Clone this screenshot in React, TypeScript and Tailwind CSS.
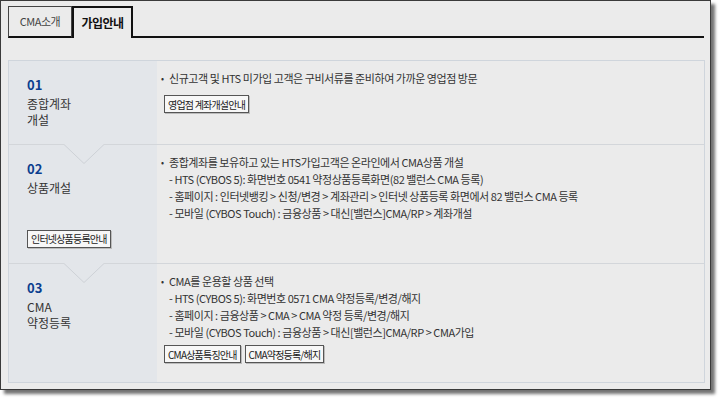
import React from 'react';

type Step = {
  no: string;
  title: string[];
  lead: string;
  subs: string[];
  leftButton?: string;
  buttons?: string[];
  height: string;
  buttonGap: string;
};

const STEPS: Step[] = [
  {
    no: '01',
    title: ['종합계좌', '개설'],
    lead: '신규고객 및 HTS 미가입 고객은 구비서류를 준비하여 가까운 영업점 방문',
    subs: [],
    buttons: ['영업점 계좌개설안내'],
    height: 'h-[83px]',
    buttonGap: 'mt-[8px]',
  },
  {
    no: '02',
    title: ['상품개설'],
    lead: '종합계좌를 보유하고 있는 HTS가입고객은 온라인에서 CMA상품 개설',
    subs: [
      'HTS (CYBOS 5): 화면번호 0541 약정상품등록화면(82 밸런스 CMA 등록)',
      '홈페이지 : 인터넷뱅킹 > 신청/변경 > 계좌관리 > 인터넷 상품등록 화면에서 82 밸런스 CMA 등록',
      '모바일 (CYBOS Touch) : 금융상품 > 대신[밸런스]CMA/RP > 계좌개설',
    ],
    leftButton: '인터넷상품등록안내',
    height: 'h-[119px]',
    buttonGap: 'mt-[4px]',
  },
  {
    no: '03',
    title: ['CMA', '약정등록'],
    lead: 'CMA를 운용할 상품 선택',
    subs: [
      'HTS (CYBOS 5): 화면번호 0571 CMA 약정등록/변경/해지',
      '홈페이지 : 금융상품 > CMA > CMA 약정 등록/변경/해지',
      '모바일 (CYBOS Touch) : 금융상품 > 대신[밸런스]CMA/RP > CMA가입',
    ],
    buttons: ['CMA상품특징안내', 'CMA약정등록/해지'],
    height: 'h-[119px]',
    buttonGap: 'mt-[4px]',
  },
];

function SmallButton({ label }: { label: string }) {
  return (
    <span className="inline-flex h-[18px] items-center border border-[#555] bg-[#f7f7f7] px-[3px] text-[10px] tracking-[-0.8px] text-[#222] shadow-[1px_1px_0_#bbb]">
      {label}
    </span>
  );
}

function Notch() {
  return (
    <svg className="absolute -top-px left-[55px]" width="40" height="21" viewBox="0 0 40 21">
      <rect x="0" y="0" width="40" height="1" fill="#e3e6ea" />
      <polyline points="0,0.5 20,19.5 40,0.5" fill="none" stroke="#cdd1d6" strokeWidth="1" />
    </svg>
  );
}

function StepRow({ step, first }: { step: Step; first: boolean }) {
  return (
    <div className={`flex ${step.height} ${first ? '' : 'border-t border-[#d3d6da]'}`}>
      <div className="relative flex w-[148px] flex-col bg-[#e3e6ea] pl-[18px] pt-[15px]">
        {!first && <Notch />}
        <div className="text-[13px] font-bold leading-[18px] text-[#0b3e8f]">{step.no}</div>
        <div className="mt-[2px] text-[12px] leading-[16px] text-[#333]">
          {step.title.map((t) => (
            <div key={t}>{t}</div>
          ))}
        </div>
        {step.leftButton && (
          <div className="mt-auto mb-[15px]">
            <SmallButton label={step.leftButton} />
          </div>
        )}
      </div>
      <div className="flex-1 pl-[4px] pt-[9px] text-[11px] leading-[17px] tracking-[-0.45px] text-[#333]">
        <div className="flex">
          <span className="w-[8px] text-[9px]">•</span>
          <span>{step.lead}</span>
        </div>
        {step.subs.map((s) => (
          <div key={s} className="pl-[8px]">- {s}</div>
        ))}
        {step.buttons && (
          <div className={`${step.buttonGap} flex gap-[4px] pl-[3px]`}>
            {step.buttons.map((b) => (
              <SmallButton key={b} label={b} />
            ))}
          </div>
        )}
      </div>
    </div>
  );
}

export default function App() {
  return (
    <div className="h-[399px] w-[720px] bg-white" style={{ fontFamily: '"Noto Sans CJK KR", "Noto Sans", sans-serif' }}>
      <div className="h-[390px] w-[711px] border border-[#3a3a3a] bg-[#ebebeb] shadow-[4px_4px_3px_rgba(0,0,0,0.55)]">
        <div className="flex pl-[7px] pt-[5px]">
          <div className="flex h-[32px] w-[64px] items-center justify-center border border-b-2 border-[#444] border-b-[#111] text-[11px] tracking-[-0.5px] text-[#444]">
            CMA소개
          </div>
          <div className="flex h-[32px] w-[61px] items-center justify-center border-2 border-b-0 border-[#111] text-[12px] font-semibold tracking-[-0.5px] text-[#111]">
            가입안내
          </div>
          <div className="h-[32px] w-[571px] border-b-2 border-[#111]" />
        </div>
        <div className="ml-[7px] mt-[22px] w-[697px] border border-[#cfd5dc]">
          {STEPS.map((s, i) => (
            <StepRow key={s.no} step={s} first={i === 0} />
          ))}
        </div>
      </div>
    </div>
  );
}
